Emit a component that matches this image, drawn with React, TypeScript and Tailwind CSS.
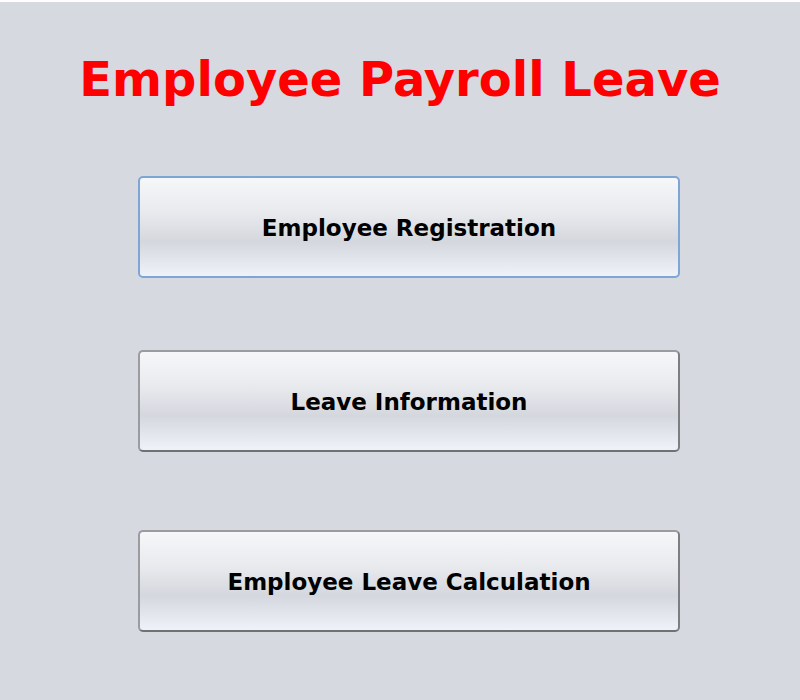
import React from 'react';

const MenuButton: React.FC<{ focused?: boolean; className?: string; children?: React.ReactNode }> = ({
	focused,
	className = '',
	children,
}) => {
	return (
		<button
			className={`flex h-[102px] w-[542px] items-center justify-center rounded-[5px] border-2 bg-[linear-gradient(to_bottom,#f6f7f9_0%,#e8eaee_35%,#d4d7dd_65%,#f0f2f9_100%)] pt-[2px] text-[23px] font-bold text-black ${
				focused ? 'border-[#7ea5d4]' : 'border-[#9a9ca0] border-b-[#6f7175] border-r-[#7c7e82]'
			} ${className}`}
			style={{ fontFamily: '"DejaVu Sans", sans-serif' }}
		>
			{children}
		</button>
	);
};

export default function App() {
	return (
		<div className="h-[700px] w-[800px] border-t-2 border-white bg-[#d6d9e0]">
			<div className="flex flex-col items-center">
				<h1
					className="mt-[49px] text-[48px] font-bold leading-[56px] text-[#ff0000]"
					style={{ fontFamily: '"DejaVu Sans", sans-serif' }}
				>
					Employee Payroll Leave
				</h1>
				<div className="ml-[18px] mt-[69px] flex flex-col">
					<MenuButton focused>Employee Registration</MenuButton>
					<MenuButton className="mt-[72px]">Leave Information</MenuButton>
					<MenuButton className="mt-[78px]">Employee Leave Calculation</MenuButton>
				</div>
			</div>
		</div>
	);
}
